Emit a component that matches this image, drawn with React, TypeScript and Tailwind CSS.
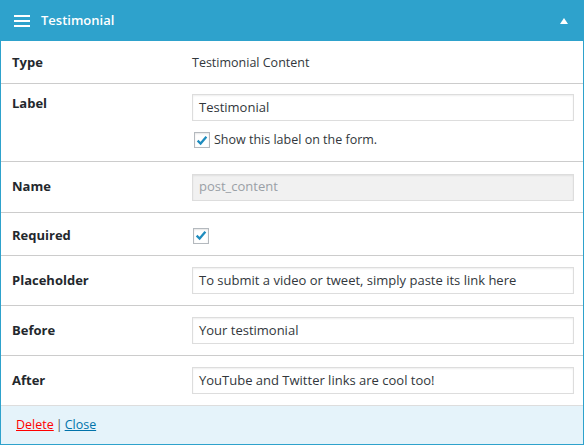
import React from 'react';

const Check = ({ className = '' }: { className?: string }) => (
  <span className={`w-4 h-4 border border-[#b4b9be] bg-white shadow-[inset_0_1px_2px_rgba(0,0,0,0.1)] flex items-center justify-center shrink-0 ${className}`}>
    <svg viewBox="0 0 16 16" className="w-[15px] h-[15px]">
      <path d="M3 8.2 L6.4 11.4 L13 3.6" fill="none" stroke="#1e8cbe" strokeWidth="2.6" strokeLinecap="butt" strokeLinejoin="miter" />
    </svg>
  </span>
);

const Row = ({ label, children, className = '' }: { label: string; children: React.ReactNode; className?: string }) => (
  <div className={`flex border-b border-[#ccc] px-[11px] ${className}`}>
    <div className="w-[180px] shrink-0 font-bold text-[#23282d]">{label}</div>
    <div className="flex-1">{children}</div>
  </div>
);

const Field = ({ value, disabled = false }: { value: string; disabled?: boolean }) => (
  <div
    className={`h-[27px] w-[382px] border border-[#ddd] shadow-[inset_0_1px_2px_rgba(0,0,0,0.07)] px-[6px] flex items-center ${
      disabled ? 'bg-[#f1f1f1] text-[#9aa0a6]' : 'bg-white text-[#32373c]'
    }`}
  >
    {value}
  </div>
);

export default function App() {
  return (
    <div className="w-[584px] h-[445px] border border-[#2ea2cc] text-[13px] text-[#444] flex flex-col" style={{ fontFamily: '"Open Sans", "Noto Sans", sans-serif' }}>
      <div className="h-[40px] bg-[#2ea2cc] flex items-center pl-[13px] pr-[15px] text-white shrink-0">
        <svg viewBox="0 0 16 12" className="w-[16px] h-[12px]">
          <rect x="0" y="0" width="16" height="2" fill="#fff" />
          <rect x="0" y="5" width="16" height="2" fill="#fff" />
          <rect x="0" y="10" width="16" height="2" fill="#fff" />
        </svg>
        <span className="ml-[11px] text-[13px] font-semibold">Testimonial</span>
        <svg viewBox="0 0 8 6" className="ml-auto w-[8px] h-[6px]">
          <path d="M0 6 L4 0 L8 6 Z" fill="#fff" />
        </svg>
      </div>

      <Row label="Type" className="h-[43px] items-center pt-[2px]">
        <span className="text-[#32373c] text-[12.5px]">Testimonial Content</span>
      </Row>

      <Row label="Label" className="h-[78px] pt-[10px]">
        <div className="flex flex-col">
          <Field value="Testimonial" />
          <label className="flex items-center gap-[4px] mt-[10px] ml-[2px] text-[#32373c] text-[12.5px]">
            <Check />
            Show this label on the form.
          </label>
        </div>
      </Row>

      <Row label="Name" className="h-[51px] items-center">
        <Field value="post_content" disabled />
      </Row>

      <Row label="Required" className="h-[43px] items-center pt-[3px]">
        <Check className="ml-[1px]" />
      </Row>

      <Row label="Placeholder" className="h-[50px] items-center">
        <Field value="To submit a video or tweet, simply paste its link here" />
      </Row>

      <Row label="Before" className="h-[50px] items-center">
        <Field value="Your testimonial" />
      </Row>

      <Row label="After" className="h-[50px] items-center border-[#ddd]">
        <Field value="YouTube and Twitter links are cool too!" />
      </Row>

      <div className="flex-1 bg-[#e5f3fa] flex items-center px-[15px] text-[#555] text-[12.5px]">
        <a className="text-[#f00] underline">Delete</a>
        <span className="mx-[2px]">|</span>
        <a className="text-[#0073aa] underline">Close</a>
      </div>
    </div>
  );
}
